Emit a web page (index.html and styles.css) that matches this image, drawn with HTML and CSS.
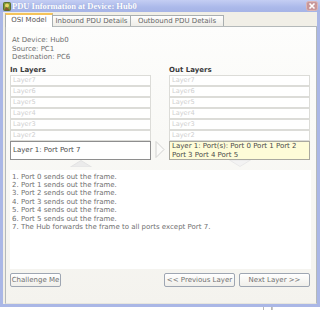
FILE: index.html
```html
<!DOCTYPE html>
<html lang="en">
<head>
  <meta charset="UTF-8">
  <title>PDU Information at Device: Hub0</title>
  <link rel="stylesheet" href="styles.css">
</head>
<body>
  <div class="window">
    <div class="titlebar">
      <svg class="app-icon" width="8" height="9" viewBox="0 0 8 9">
        <rect x="0.5" y="0.5" width="7" height="8" rx="1" fill="#7c9a3c" stroke="#5d6e2c"/>
        <circle cx="4" cy="3.5" r="2" fill="#e8d36a"/>
        <path d="M1 8 L3.5 5 L7 8 Z" fill="#8a5a2c"/>
      </svg>
      <span class="title">PDU Information at Device: Hub0</span>
      <svg class="close" width="12" height="10" viewBox="0 0 12 10">
        <rect x="0.5" y="0.5" width="11" height="9" rx="2" fill="#c8979a" stroke="#dcb7b8"/>
        <path d="M3.5 2.5 L8.5 7.5 M8.5 2.5 L3.5 7.5" stroke="#fff" stroke-width="1.6"/>
      </svg>
    </div>

    <div class="frame">
      <div class="tabs">
        <div class="tab active tab-osi">OSI Model</div>
        <div class="tab tab-in">Inbound PDU Details</div>
        <div class="tab tab-out">Outbound PDU Details</div>
      </div>

      <div class="panel">
        <div class="device-info">
          <div>At Device: Hub0</div>
          <div>Source: PC1</div>
          <div>Destination: PC6</div>
        </div>

        <div class="layers">
          <div class="column">
            <div class="col-title">In Layers</div>
            <div class="layer">Layer7</div>
            <div class="layer">Layer6</div>
            <div class="layer">Layer5</div>
            <div class="layer">Layer4</div>
            <div class="layer">Layer3</div>
            <div class="layer">Layer2</div>
            <div class="layer layer-one">Layer 1: Port Port 7</div>
            <div class="arrow-row">
              <svg width="22" height="7" viewBox="0 0 22 7">
                <polygon points="0.5,7 11,0.5 21.5,7" fill="#ebebeb" stroke="#e2e2e2"/>
              </svg>
            </div>
          </div>

          <div class="between">
            <svg width="10" height="17" viewBox="0 0 10 17">
              <polygon points="1,0.5 9,8.5 1,16.5" fill="#fbfbf9" stroke="#d2d2d0"/>
            </svg>
          </div>

          <div class="column">
            <div class="col-title">Out Layers</div>
            <div class="layer">Layer7</div>
            <div class="layer">Layer6</div>
            <div class="layer">Layer5</div>
            <div class="layer">Layer4</div>
            <div class="layer">Layer3</div>
            <div class="layer">Layer2</div>
            <div class="layer layer-one layer-out">Layer 1: Port(s): Port 0 Port 1 Port 2 Port 3 Port 4 Port 5</div>
            <div class="arrow-row">
              <svg width="22" height="7" viewBox="0 0 22 7">
                <polygon points="0.5,0 21.5,0 11,6.5" fill="#f3f3f3" stroke="#e8e8e8"/>
              </svg>
            </div>
          </div>
        </div>

        <div class="steps">
          <div>1. Port 0 sends out the frame.</div>
          <div>2. Port 1 sends out the frame.</div>
          <div>3. Port 2 sends out the frame.</div>
          <div>4. Port 3 sends out the frame.</div>
          <div>5. Port 4 sends out the frame.</div>
          <div>6. Port 5 sends out the frame.</div>
          <div>7. The Hub forwards the frame to all ports except Port 7.</div>
        </div>

        <div class="buttons">
          <button class="btn btn-challenge">Challenge Me</button>
          <div class="nav-buttons">
            <button class="btn btn-nav">&lt;&lt; Previous Layer</button>
            <button class="btn btn-nav">Next Layer &gt;&gt;</button>
          </div>
        </div>
      </div>
    </div>
  </div>

  <div class="behind">
    <span></span><span></span><span></span>
  </div>
</body>
</html>
```

FILE: styles.css
```css
body { margin: 0; background: #fff; font-family: "DejaVu Sans", sans-serif; font-size: 7px; }

.window { width: 320px; height: 307px; display: flex; flex-direction: column; }

.titlebar { height: 12px; display: flex; align-items: center; background: linear-gradient(#c4cef3, #abb9ea 60%, #a6b4e6); }
.app-icon { margin-left: 3px; flex-shrink: 0; }
.title { margin-left: 1px; font-family: "Liberation Serif", serif; font-weight: bold; font-size: 8.5px; color: #fff; text-shadow: 0 0 1px #8c9bd0; white-space: nowrap; }
.close { margin-left: auto; margin-right: 2px; flex-shrink: 0; }

.frame { flex: 1; display: flex; flex-direction: column; background: #f1efe7; border: solid #aab7e6; border-width: 0 3px 3px 3px; }

.tabs { display: flex; align-items: flex-end; height: 13px; padding: 1px 0 0 2px; }
.tab { height: 11px; line-height: 11px; box-sizing: border-box; color: #666; text-align: center; white-space: nowrap; border: 1px solid #a9afb0; border-bottom: 0; background: linear-gradient(#fefefe, #eeede7); }
.tab + .tab { border-left: 0; }
.tab.active { position: relative; z-index: 1; height: 14px; margin-bottom: -1px; line-height: 11px; background: #fff; border-top: 2px solid #f5c35a; color: #555; }
.tab-osi { width: 48px; }
.tab-in { width: 78px; }
.tab-out { width: 93px; }

.panel { flex: 1; margin-left: 2px; padding: 0 5px 0 4px; border: 1px solid #b4b9ba; border-bottom-color: #e6e5de; background: linear-gradient(#fdfdfc, #f9f9f6 40%, #f4f3ee); display: flex; flex-direction: column; }

.device-info { padding: 9px 0 0 2px; line-height: 8.6px; color: #6e6e6e; }

.layers { display: flex; margin-top: 4px; }
.column { width: 141px; }
.col-title { line-height: 9px; font-weight: bold; color: #3a3a3a; }
.layer { height: 11px; line-height: 9px; box-sizing: border-box; padding-left: 2px; background: #fff; border: 1px solid #dcdcd8; color: #cfcfcf; font-size: 6.6px; }
.layer-one { height: 19px; line-height: 17px; border-color: #8e8e8e; color: #4a4a4a; font-size: 7px; }
.layer-out { line-height: 8.6px; padding-top: 0.5px; background: #fefcd8; border-color: #aaa9a0; }
.arrow-row { height: 7px; display: flex; justify-content: center; }
.between { width: 18px; display: flex; justify-content: center; align-items: flex-end; padding-bottom: 9px; box-sizing: border-box; }

.steps { margin-top: 3px; height: 99px; box-sizing: border-box; padding: 3px 2px; background: #fff; line-height: 8.35px; color: #707070; }

.buttons { display: flex; justify-content: space-between; margin-top: 4px; padding-right: 1px; }
.nav-buttons { display: flex; gap: 4px; }
.btn { height: 14px; padding: 0; font-family: "DejaVu Sans", sans-serif; font-size: 7px; color: #707070; background: linear-gradient(#ffffff, #f0efea); border: 1px solid #9ea6b2; border-radius: 2px; }
.btn-challenge { width: 51px; }
.btn-nav { width: 71px; }

.behind { display: flex; height: 3px; margin-left: 256px; }
.behind span { width: 7px; border-right: 1px solid #b8b8b8; }
.behind span:last-child { width: 12px; border-right: 0; border-left: 1px solid #c8c8c8; }
```
